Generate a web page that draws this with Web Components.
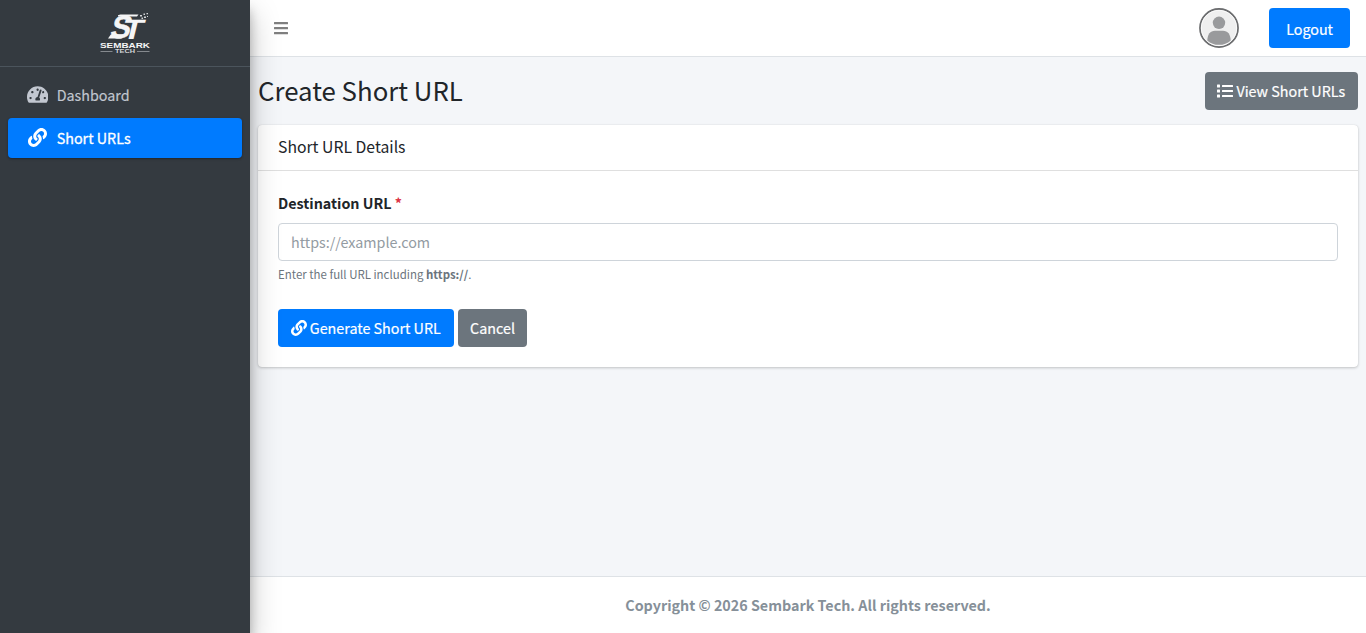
<!DOCTYPE html>
<html lang="en">
<head>
<meta charset="utf-8">
<title>Create Short URL</title>
<style>
*{box-sizing:border-box}
html,body{height:100%}
body{margin:0;overflow:hidden;background:#f4f6f9;color:#212529;font-family:'Noto Sans CJK SC','Noto Sans',sans-serif;font-size:14.32px;line-height:24px}
</style>
</head>
<body>
<admin-layout>
  <admin-sidebar slot="sidebar">
    <nav-item icon="dashboard">Dashboard</nav-item>
    <nav-item icon="link" active>Short URLs</nav-item>
  </admin-sidebar>
  <admin-topbar slot="topbar"></admin-topbar>
  <page-header heading="Create Short URL">
    <app-button variant="secondary" icon="list">View Short URLs</app-button>
  </page-header>
  <app-card heading="Short URL Details">
    <url-form></url-form>
  </app-card>
  <admin-footer slot="footer">Copyright © 2026 Sembark Tech. All rights reserved.</admin-footer>
</admin-layout>

<script>
(function (global) {
  'use strict';

  // [viewBox width, path]
  var ICONS = {
    dashboard: [576, 'M288 32C128.94 32 0 160.94 0 320c0 52.8 14.25 102.26 39.06 144.8 5.61 9.62 16.3 15.2 27.44 15.2h443c11.14 0 21.83-5.58 27.44-15.2C561.75 422.26 576 372.8 576 320c0-159.06-128.94-288-288-288zm0 64c14.71 0 26.58 10.13 30.32 23.65-1.11 2.26-2.64 4.23-3.45 6.67l-9.22 27.67c-5.13 3.49-10.97 6.01-17.64 6.01-17.67 0-32-14.33-32-32S270.33 96 288 96zM96 384c-17.67 0-32-14.33-32-32s14.33-32 32-32 32 14.33 32 32-14.33 32-32 32zm48-160c-17.67 0-32-14.33-32-32s14.33-32 32-32 32 14.33 32 32-14.33 32-32 32zm246.77-72.41l-61.33 184C343.13 347.33 352 364.54 352 384c0 11.72-3.38 22.55-8.88 32H232.88c-5.5-9.45-8.88-20.28-8.88-32 0-33.94 26.5-61.43 59.9-63.59l61.34-184.01c4.17-12.56 17.73-19.45 30.36-15.17 12.57 4.19 19.35 17.79 15.17 30.36zm14.66 57.2l15.52-46.55c3.47-1.29 7.13-2.23 11.05-2.23 17.67 0 32 14.33 32 32s-14.33 32-32 32c-11.38-.01-20.89-6.28-26.57-15.22zM480 384c-17.67 0-32-14.33-32-32s14.33-32 32-32 32 14.33 32 32-14.33 32-32 32z'],
    link: [512, 'M326.612 185.391c59.747 59.809 58.927 155.698.36 214.59-.11.12-.24.25-.36.37l-67.2 67.2c-59.27 59.27-155.699 59.262-214.96 0-59.27-59.26-59.27-155.7 0-214.96l37.106-37.106c9.84-9.84 26.786-3.3 27.294 10.606.648 17.722 3.826 35.527 9.69 52.721 1.986 5.822.567 12.262-3.783 16.612l-13.087 13.087c-28.026 28.026-28.905 73.66-1.155 101.96 28.024 28.579 74.086 28.749 102.325.51l67.2-67.19c28.191-28.191 28.073-73.757 0-101.83-3.701-3.694-7.429-6.564-10.341-8.569a16.037 16.037 0 0 1-6.947-12.606c-.396-10.567 3.348-21.456 11.698-29.806l21.054-21.055c5.521-5.521 14.182-6.199 20.584-1.731a152.482 152.482 0 0 1 20.522 17.197zM467.547 44.449c-59.261-59.262-155.69-59.27-214.96 0l-67.2 67.2c-.12.12-.25.25-.36.37-58.566 58.892-59.387 154.781.36 214.59a152.454 152.454 0 0 0 20.521 17.196c6.402 4.468 15.064 3.789 20.584-1.731l21.054-21.055c8.35-8.35 12.094-19.239 11.698-29.806a16.037 16.037 0 0 0-6.947-12.606c-2.912-2.005-6.64-4.875-10.341-8.569-28.073-28.073-28.191-73.639 0-101.83l67.2-67.19c28.239-28.239 74.3-28.069 102.325.51 27.75 28.3 26.872 73.934-1.155 101.96l-13.087 13.087c-4.35 4.35-5.769 10.79-3.783 16.612 5.864 17.194 9.042 34.999 9.69 52.721.509 13.906 17.454 20.446 27.294 10.606l37.106-37.106c59.271-59.259 59.271-155.699.001-214.959z'],
    list: [512, 'M80 368H16a16 16 0 0 0-16 16v64a16 16 0 0 0 16 16h64a16 16 0 0 0 16-16v-64a16 16 0 0 0-16-16zm0-320H16A16 16 0 0 0 0 64v64a16 16 0 0 0 16 16h64a16 16 0 0 0 16-16V64a16 16 0 0 0-16-16zm0 160H16a16 16 0 0 0-16 16v64a16 16 0 0 0 16 16h64a16 16 0 0 0 16-16v-64a16 16 0 0 0-16-16zm416 176H176a16 16 0 0 0-16 16v32a16 16 0 0 0 16 16h320a16 16 0 0 0 16-16v-32a16 16 0 0 0-16-16zm0-320H176a16 16 0 0 0-16 16v32a16 16 0 0 0 16 16h320a16 16 0 0 0 16-16V80a16 16 0 0 0-16-16zm0 160H176a16 16 0 0 0-16 16v32a16 16 0 0 0 16 16h320a16 16 0 0 0 16-16v-32a16 16 0 0 0-16-16z'],
    bars: [448, 'M16 132h416a16 16 0 0 0 16-16V76a16 16 0 0 0-16-16H16A16 16 0 0 0 0 76v40a16 16 0 0 0 16 16zm0 160h416a16 16 0 0 0 16-16v-40a16 16 0 0 0-16-16H16a16 16 0 0 0-16 16v40a16 16 0 0 0 16 16zm0 160h416a16 16 0 0 0 16-16v-40a16 16 0 0 0-16-16H16a16 16 0 0 0-16 16v40a16 16 0 0 0 16 16z']
  };

  function icon(name, size) {
    var def = ICONS[name];
    if (!def) return '';
    return '<svg class="icon" viewBox="0 0 ' + def[0] + ' 512" width="' + (size * def[0] / 512) + '" height="' + size + '" fill="currentColor" aria-hidden="true"><path d="' + def[1] + '"/></svg>';
  }

  function define(name, template) {
    global.customElements.define(name, class extends HTMLElement {
      constructor() {
        super();
        this.attachShadow({ mode: 'open' });
      }

      connectedCallback() {
        this.shadowRoot.innerHTML = '<style>*{box-sizing:border-box}.icon{display:block;flex:none}</style>' + template(this);
      }
    });
  }

  define('admin-layout', function () {
    return [
      '<style>',
      ':host{display:grid;grid-template-columns:250px minmax(0,1fr);height:100vh}',
      '.page{display:flex;flex-direction:column;min-width:0}',
      'main{flex:1;padding:0 8px}',
      '</style>',
      '<slot name="sidebar"></slot>',
      '<div class="page"><slot name="topbar"></slot><main><slot></slot></main><slot name="footer"></slot></div>'
    ].join('');
  });

  define('brand-logo', function () {
    return [
      '<style>:host{display:block;width:52px;height:54px}svg{display:block;overflow:visible}</style>',
      '<svg width="52" height="54" viewBox="0 -6 52 54" fill="#f5f5f6" role="img" aria-label="Sembark Tech">',
      '<g font-family="Liberation Sans,sans-serif" font-weight="700">',
      '<text transform="translate(10 26) skewX(-14)" font-size="32" textLength="20" lengthAdjust="spacingAndGlyphs" stroke="#f5f5f6" stroke-width=".5">S</text>',
      '<text transform="translate(21.500 26.500) skewX(-14)" font-size="28" textLength="21" lengthAdjust="spacingAndGlyphs">T</text>',
      '<text x="1" y="36.2" font-size="6.6" textLength="50" lengthAdjust="spacingAndGlyphs">SEMBARK</text>',
      '<text x="16" y="41.3" font-size="4.8" textLength="20" lengthAdjust="spacingAndGlyphs" fill="#d2d4d6">TECH</text>',
      '</g>',
      // swoosh above and below the monogram
      '<path d="M19 3.200c1-.6 2-.8 3.500-.8h17l-1.500 2H19zM9 26.500l2.800-4h13l-1.200 2.700c-.5 1-1.200 1.300-2.400 1.300z"/>',
      '<path d="M1.500 39.2h12v.9h-12zM38 39.2h12.500v.9H38z" fill="#a0a4a8"/>',
      '<path d="M41 3h2v1.500h-2zM44.500 1.500h1.500V3h-1.500zM47.500 1H49v1.300h-1.500zM45 4.500h2V6h-2zM42.500 5.500H44V7h-1.500zM48 4h1v1h-1z" fill="#d3d5d7"/>',
      '</svg>'
    ].join('');
  });

  define('admin-sidebar', function () {
    return [
      '<style>',
      ':host{display:block;position:relative;z-index:2;width:250px;height:100%;background:#343a40;box-shadow:0 14px 28px rgba(0,0,0,.25),0 10px 10px rgba(0,0,0,.22)}',
      '.brand{display:flex;justify-content:center;height:67px;padding-top:6px;border-bottom:1px solid #4b545c}',
      'nav{display:flex;flex-direction:column;gap:3px;padding:8px}',
      '</style>',
      '<div class="brand"><brand-logo></brand-logo></div>',
      '<nav><slot></slot></nav>'
    ].join('');
  });

  define('nav-item', function (el) {
    return [
      '<style>',
      ':host{display:flex;align-items:center;height:40px;padding:0 16px;border-radius:4px;color:#c2c7d0;-webkit-text-stroke:.15px}',
      ':host([active]){color:#fff;background:#007bff;box-shadow:0 1px 3px rgba(0,0,0,.12),0 1px 2px rgba(0,0,0,.24);-webkit-text-stroke:.3px}',
      '.mark{display:flex;justify-content:center;width:27px;margin-right:5.700px;padding-bottom:2px}',
      '</style>',
      '<span class="mark">' + icon(el.getAttribute('icon'), 19) + '</span>',
      '<span><slot></slot></span>'
    ].join('');
  });

  define('app-button', function (el) {
    var name = el.getAttribute('icon');
    return [
      '<style>',
      ':host{display:inline-flex}',
      'button{display:flex;align-items:center;height:38px;padding:0 12.500px;border:0;border-radius:4px;color:#fff;background:#007bff;font:inherit;white-space:nowrap;cursor:pointer;-webkit-text-stroke:.2px}',
      ':host([variant=secondary]) button{background:#6c757d}',
      ':host([icon]) button{padding:0 12.800px}',
      ':host([wide]) button{height:40px;padding:2px 17px 0}',
      '.icon{margin-right:3px}',
      '</style>',
      '<button type="button">' + (name ? icon(name, 16) : '') + '<slot></slot></button>'
    ].join('');
  });

  define('user-avatar', function () {
    return [
      '<style>:host{display:block;width:40px;height:40px}svg{display:block}</style>',
      '<svg width="40" height="40" viewBox="0 0 40 40" role="img" aria-label="User">',
      '<circle cx="20" cy="20" r="19" fill="#efefef" stroke="#6c6d6f" stroke-width="1.800"/>',
      '<circle cx="20" cy="20" r="17.700" fill="none" stroke="#fff" stroke-width=".8"/>',
      '<circle cx="20" cy="14.800" r="6.200" fill="#999a9c"/>',
      '<path d="M8.300 32.400c.2-6 2.900-9.700 7.700-9.700h8c4.800 0 7.500 3.700 7.700 9.700-3.200 3.100-7.200 4.400-11.700 4.400s-8.500-1.300-11.700-4.400z" fill="#999a9c"/>',
      '</svg>'
    ].join('');
  });

  define('admin-topbar', function () {
    return [
      '<style>',
      ':host{display:flex;align-items:center;justify-content:space-between;height:57px;padding:0 16px 0 24px;background:#fff;border-bottom:1px solid #dee2e6}',
      '.menu{color:#7f7f7f}',
      '.user{display:flex;align-items:center;gap:30px}',
      '</style>',
      '<div class="menu">' + icon('bars', 16) + '</div>',
      '<div class="user"><user-avatar></user-avatar><app-button wide>Logout</app-button></div>'
    ].join('');
  });

  define('page-header', function (el) {
    return [
      '<style>',
      ':host{display:flex;align-items:flex-start;justify-content:space-between;padding:15px 0}',
      'h1{margin:0;font-size:25.8px;font-weight:400;line-height:35px}',
      '</style>',
      '<h1>' + el.getAttribute('heading') + '</h1><slot></slot>'
    ].join('');
  });

  define('app-card', function (el) {
    return [
      '<style>',
      ':host{display:block;border-radius:4px;background:#fff;box-shadow:0 0 1px rgba(0,0,0,.125),0 1px 3px rgba(0,0,0,.2)}',
      'header{height:46px;padding:10px 20px;border-bottom:1px solid rgba(0,0,0,.125);font-size:15.75px;line-height:23px}',
      '.body{padding:20px}',
      '</style>',
      '<header>' + el.getAttribute('heading') + '</header>',
      '<div class="body"><slot></slot></div>'
    ].join('');
  });

  define('url-form', function () {
    return [
      '<style>',
      ':host{display:block}',
      'label{display:block;margin-bottom:8px;font-weight:700}',
      'label span{color:#dc3545}',
      'input{display:block;width:100%;height:38px;padding:5px 12px 7px;border:1px solid #ced4da;border-radius:4px;background:#fff;color:#495057;font:inherit}',
      'input::placeholder{color:#939ba2;opacity:1}',
      '.hint{margin:3px 0 25px;color:#6c757d;font-size:11.46px;line-height:20px}',
      '.actions{display:flex;gap:4px}',
      '</style>',
      '<label for="destination">Destination URL <span>*</span></label>',
      '<input id="destination" type="url" placeholder="https://example.com">',
      '<div class="hint">Enter the full URL including <strong>https://</strong>.</div>',
      '<div class="actions">',
      '<app-button icon="link">Generate Short URL</app-button>',
      '<app-button variant="secondary">Cancel</app-button>',
      '</div>'
    ].join('');
  });

  define('admin-footer', function () {
    return [
      '<style>',
      ':host{display:block;height:57px;padding:16px;border-top:1px solid #dee2e6;background:#fff;color:#869099;font-weight:700;text-align:center}',
      '</style>',
      '<slot></slot>'
    ].join('');
  });
})(window);
</script>
</body>
</html>
